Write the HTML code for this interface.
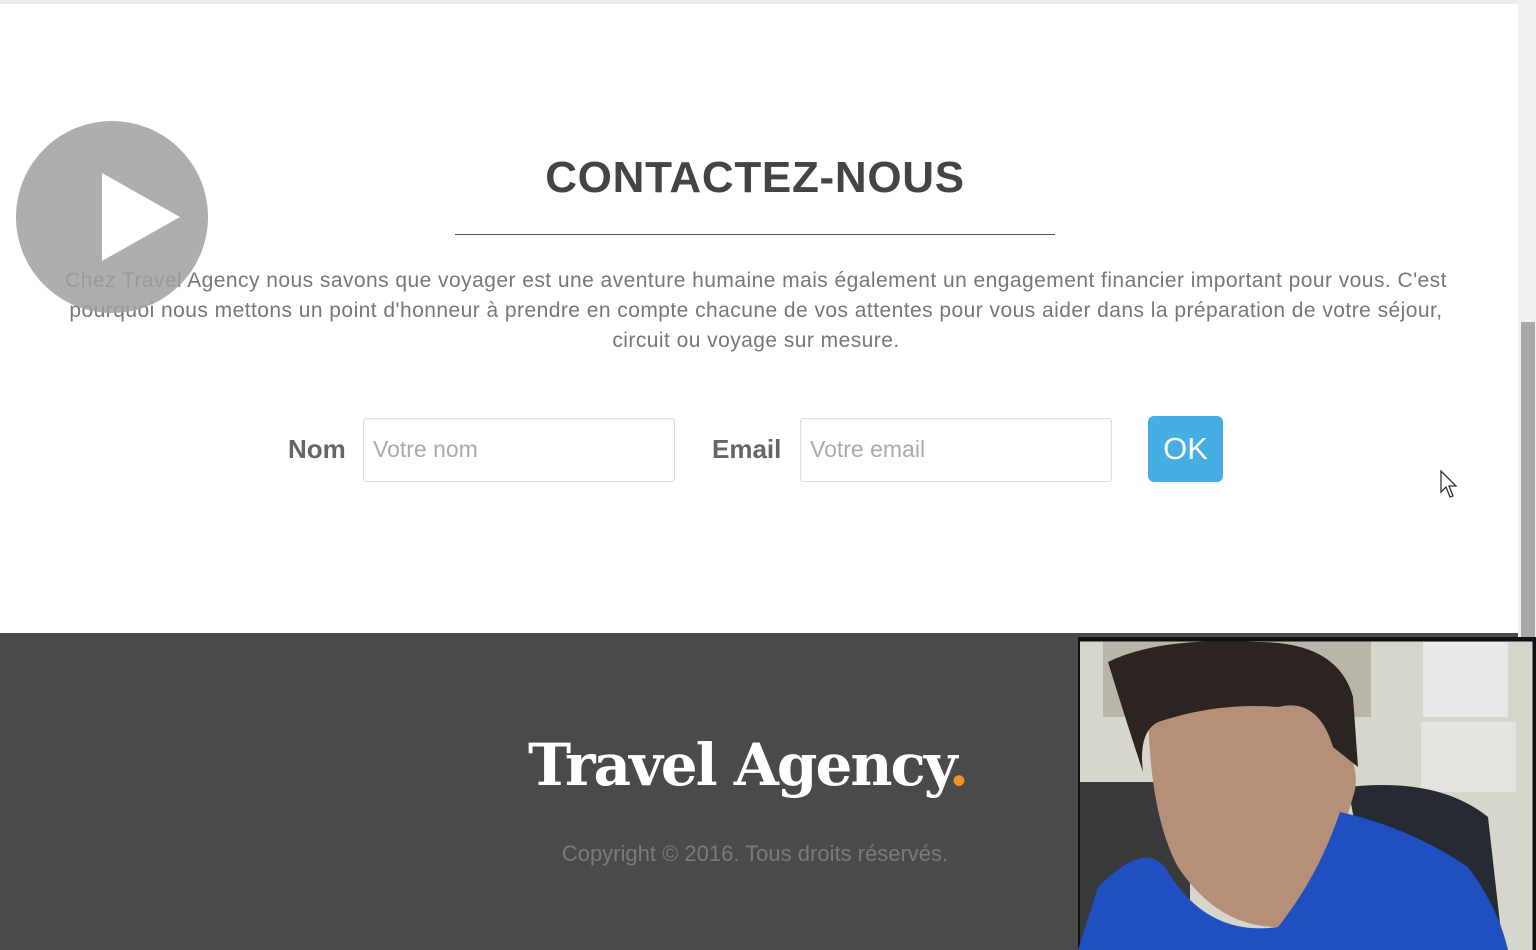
<!DOCTYPE html>
<html><head><meta charset="utf-8"><style>
html,body{margin:0;padding:0;width:1536px;height:950px;overflow:hidden;background:#fff;font-family:"Liberation Sans",Arial,sans-serif;position:relative}
.topbar{position:absolute;left:0;top:0;width:1518px;height:4px;background:#ececec}
.sb{position:absolute;left:1518px;top:0;width:18px;height:950px;background:#f1f1f1}
.thumb{position:absolute;left:1521px;top:322px;width:14px;height:628px;background:#a8a8a8}
h1{position:absolute;left:0;width:1510px;top:153px;margin:0;text-align:center;font-size:44px;font-weight:bold;color:#444;letter-spacing:0.7px}
.rule{position:absolute;left:455px;top:234px;width:600px;height:1px;background:#555}
.para{position:absolute;left:58px;width:1396px;top:266px;text-align:center;font-size:21px;letter-spacing:0.45px;line-height:30px;color:#777}
.lbl{position:absolute;top:434px;font-size:26px;font-weight:bold;color:#666}
.inp{position:absolute;top:418px;height:64px;width:312px;border:1px solid #ddd;border-radius:3px;box-sizing:border-box;box-shadow:inset 0 1px 2px rgba(0,0,0,.06);font-size:23px;color:#aaa;padding:17px 0 0 9px}
.ok{position:absolute;left:1148px;top:416px;width:75px;height:66px;background:#45aee2;border-radius:6px;color:#fff;font-size:31px;text-align:center;line-height:66px}
.foot{position:absolute;left:0;top:633px;width:1518px;height:317px;background:#4a4a4a}
.logo{position:absolute;left:528px;top:731px;font-family:"DejaVu Serif","Liberation Serif",serif;font-weight:bold;font-size:58px;color:#fff;letter-spacing:-2px}
.logo span{color:#f0922c}
.copy{position:absolute;left:0;width:1510px;top:841px;text-align:center;font-size:22px;color:#7a7a7a}
.play{position:absolute;left:16px;top:121px;width:192px;height:192px;border-radius:50%;background:rgba(160,160,160,.85)}
.cam{position:absolute;left:1078px;top:637px;width:458px;height:313px;background:#111}
</style></head><body>
<div class="topbar"></div>
<div class="sb"></div><div class="thumb"></div>
<h1>CONTACTEZ-NOUS</h1>
<div class="rule"></div>
<div class="para">Chez Travel Agency nous savons que voyager est une aventure humaine mais également un engagement financier important pour vous. C'est pourquoi nous mettons un point d'honneur à prendre en compte chacune de vos attentes pour vous aider dans la préparation de votre séjour, circuit ou voyage sur mesure.</div>
<div class="lbl" style="left:288px">Nom</div>
<div class="inp" style="left:363px">Votre nom</div>
<div class="lbl" style="left:712px">Email</div>
<div class="inp" style="left:800px">Votre email</div>
<div class="ok">OK</div>
<svg style="position:absolute;left:1440px;top:470px" width="22" height="30" viewBox="0 0 22 30"><path d="M1 1 L1 22 L6 17 L10 27 L13 26 L9 16 L16 16 Z" fill="#fff" stroke="#333" stroke-width="1.3"/></svg>
<div class="foot"></div>
<div class="logo">Travel Agency<span>.</span></div>
<div class="copy">Copyright © 2016. Tous droits réservés.</div>
<div class="play"><svg width="192" height="192"><path d="M86 52 L86 140 L164 96 Z" fill="#fff"/></svg></div>
<div class="cam"><svg width="458" height="313" viewBox="0 0 458 313">
<rect x="2" y="3" width="454" height="310" fill="#d6d6cc"/>
<rect x="25" y="3" width="268" height="77" fill="#b9b5a8"/>
<rect x="345" y="5" width="85" height="75" fill="#e8e8e6"/>
<rect x="343" y="85" width="95" height="70" fill="#e3e3e0"/>
<rect x="2" y="145" width="110" height="168" fill="#3a3a3c"/>
<path d="M270 150 Q360 140 410 180 L425 313 L300 313 Z" fill="#262a33"/>
<path d="M70 60 Q70 175 100 230 Q140 290 200 290 Q250 260 260 210 L275 160 Q285 130 260 100 L230 60 Z" fill="#b58f78"/>
<path d="M30 25 Q80 0 180 5 Q260 5 275 60 L280 130 L255 110 Q240 60 200 70 Q140 65 80 85 Q60 95 65 135 Q50 90 30 25 Z" fill="#2b2420"/>
<path d="M0 313 L20 250 Q70 200 90 235 Q130 300 200 290 Q240 240 262 175 Q330 190 390 230 Q420 270 430 313 Z" fill="#1f4fc0"/>
<path d="M2 3 L456 3 L456 313" fill="none" stroke="#111" stroke-width="3"/>
</svg></div>
</body></html>
